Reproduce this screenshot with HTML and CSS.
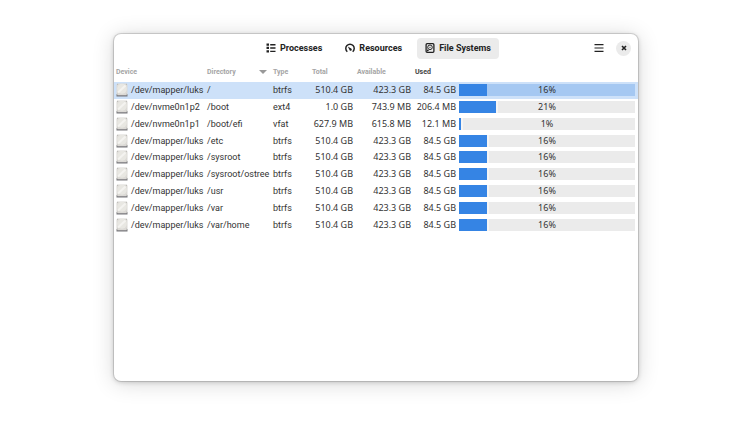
FILE: index.html
```html
<!DOCTYPE html>
<html lang="en">
<head>
    <meta charset="UTF-8">
    <meta name="viewport" content="width=device-width, initial-scale=1.0">
    <title>System Monitor</title>
    <link rel="stylesheet" href="styles.css">
</head>
<body>
    <svg class="defs" aria-hidden="true">
        <symbol id="drive" viewBox="0 0 12 14">
            <path d="M0.5 11h11v2.5H0.5z" fill="#77767b"/>
            <rect x="0.5" y="0.5" width="11" height="11.7" rx="1.5" fill="#dcdad6"/>
            <ellipse cx="6" cy="5.8" rx="4.8" ry="5" fill="#e8e7e2"/>
            <path d="M2 9.5 9.5 2.5" stroke="#f4f3f0" stroke-width="2"/>
            <path d="M1 1.3h1M10 1.3h1M1 11.2h1M10 11.2h1" stroke="#b0afac" stroke-width="0.8"/>
        </symbol>
    </svg>
    <main class="window">
        <header class="header-bar">
            <nav class="tabs">
                <button type="button" class="tab">
                    <svg viewBox="0 0 10 10" class="icon"><path d="M0.5 0.5h2.5v2.3h-2.5zM0.5 3.8h2.5v2.3h-2.5zM0.5 7.2h2.5v2.3h-2.5zM4.2 1h5.3v1.4H4.2zM4.2 4.3h5.3v1.4H4.2zM4.2 7.7h5.3v1.4H4.2z"/></svg>
                    Processes
                </button>
                <button type="button" class="tab">
                    <svg viewBox="0 0 10 10" class="icon"><path d="M2.3 8.7A4.2 4.2 0 1 1 7.7 8.7" fill="none" stroke="currentColor" stroke-width="1.5"/><path d="M2.8 3.4 6.2 5.6A1.2 1.2 0 1 1 4.4 6.7Z"/></svg>
                    Resources
                </button>
                <button type="button" class="tab active">
                    <svg viewBox="0 0 10 10" class="icon"><rect x="1.1" y="0.7" width="7.8" height="8.6" rx="1" fill="none" stroke="currentColor" stroke-width="1.3"/><circle cx="5" cy="4.3" r="2.3" fill="none" stroke="currentColor"/><circle cx="5" cy="4.3" r="0.6"/><path d="M2 8.5V6.2L4.2 7.7Z"/></svg>
                    File Systems
                </button>
            </nav>
            <div class="controls">
                <button type="button" class="menu-btn" aria-label="Main menu">
                    <svg viewBox="0 0 10 10" class="icon"><path d="M0.5 1h9v1.2h-9zM0.5 4.4h9v1.2h-9zM0.5 7.8h9V9h-9z"/></svg>
                </button>
                <button type="button" class="close-btn" aria-label="Close">
                    <svg viewBox="0 0 6 6"><path d="M1 1 5 5M5 1 1 5" stroke="currentColor" stroke-width="1.6"/></svg>
                </button>
            </div>
        </header>

        <table class="disks">
            <colgroup>
                <col class="col-device">
                <col class="col-directory">
                <col class="col-type">
                <col class="col-total">
                <col class="col-available">
                <col class="col-used">
                <col>
            </colgroup>
            <thead>
                <tr>
                    <th>Device</th>
                    <th><span class="sorted">Directory <svg viewBox="0 0 8 4" class="arrow"><path d="M0 0h8L4 4z"/></svg></span></th>
                    <th>Type</th>
                    <th>Total</th>
                    <th>Available</th>
                    <th class="used" colspan="2">Used</th>
                </tr>
            </thead>
            <tbody id="rows"></tbody>
        </table>
    </main>
    <script src="script.js"></script>
</body>
</html>
```
FILE: styles.css
```css
* {
    box-sizing: border-box;
}

body {
    font-family: Roboto, "Noto Sans", sans-serif;
    font-size: 9px;
    line-height: 12px;
    color: #333;
    margin: 0;
    padding: 34px 114px 42px;
    min-height: 100vh;
    display: flex;
    background-color: #fff;
}

.defs {
    display: none;
}

.window {
    flex: 1;
    background: #fff;
    border-radius: 7px;
    box-shadow: 0 0 0 1px rgba(0, 0, 0, 0.12), 0 1px 5px rgba(0, 0, 0, 0.2), 0 2px 22px rgba(0, 0, 0, 0.16);
}

.header-bar {
    display: grid;
    grid-template-columns: 1fr auto 1fr;
    align-items: center;
    height: 28px;
    padding: 0 7px 0 12px;
}

button {
    display: flex;
    align-items: center;
    justify-content: center;
    padding: 0;
    border: none;
    background: none;
    color: #222;
    font: inherit;
    cursor: pointer;
}

.icon {
    width: 10px;
    height: 10px;
    fill: currentColor;
}

.tabs {
    grid-column: 2;
    display: flex;
    gap: 7px;
}

.tab {
    gap: 4px;
    height: 21px;
    padding: 0 8px;
    border-radius: 4px;
    font-weight: bold;
}

.tab.active {
    background: #ebebeb;
}

.controls {
    display: flex;
    justify-content: flex-end;
    align-items: center;
    gap: 12px;
}

.close-btn {
    width: 15px;
    height: 15px;
    border-radius: 50%;
    background: #ebebeb;
}

.close-btn svg {
    width: 6px;
    height: 6px;
}

.disks {
    width: 100%;
    height: 171px;
    table-layout: fixed;
    border-collapse: collapse;
}

.col-device {
    width: 91px;
}

.col-directory {
    width: 66px;
}

.col-type {
    width: 39px;
}

.col-total {
    width: 45px;
}

.col-available {
    width: 58px;
}

.col-used {
    width: 45px;
}

th {
    height: 20px;
    padding: 0 2px;
    font-size: 7px;
    text-align: left;
    color: #a5a5a5;
}

th.used {
    color: #444;
}

.sorted {
    display: flex;
    align-items: center;
    justify-content: space-between;
    padding-right: 2px;
}

.arrow {
    width: 8px;
    height: 4px;
    fill: #999;
}

td {
    padding: 0 2px;
    white-space: nowrap;
}

.selected {
    background: #cde1f9;
}

.device {
    display: flex;
    align-items: center;
    gap: 3px;
}

.drive {
    flex-shrink: 0;
    width: 12px;
    height: 14px;
}

.size,
.percent {
    font-family: "Noto Sans", sans-serif;
}

.size {
    text-align: right;
}

.bar-cell {
    padding: 0 3px 0 1px;
}

.bar {
    display: grid;
    height: 12px;
    background: #ebebeb;
    text-align: center;
}

.bar .fill,
.bar .percent {
    grid-area: 1 / 1;
}

.bar .fill {
    background: #3584e4;
    box-shadow: 2px 0 #f6f5f4;
}

.selected .bar {
    background: #a5c8f2;
}

.selected .fill {
    box-shadow: none;
}
```
FILE: script.js
```javascript
const disks = [
    ["/dev/mapper/luks", "/", "btrfs", "510.4 GB", "423.3 GB", "84.5 GB", 16],
    ["/dev/nvme0n1p2", "/boot", "ext4", "1.0 GB", "743.9 MB", "206.4 MB", 21],
    ["/dev/nvme0n1p1", "/boot/efi", "vfat", "627.9 MB", "615.8 MB", "12.1 MB", 1],
    ["/dev/mapper/luks", "/etc", "btrfs", "510.4 GB", "423.3 GB", "84.5 GB", 16],
    ["/dev/mapper/luks", "/sysroot", "btrfs", "510.4 GB", "423.3 GB", "84.5 GB", 16],
    ["/dev/mapper/luks", "/sysroot/ostree", "btrfs", "510.4 GB", "423.3 GB", "84.5 GB", 16],
    ["/dev/mapper/luks", "/usr", "btrfs", "510.4 GB", "423.3 GB", "84.5 GB", 16],
    ["/dev/mapper/luks", "/var", "btrfs", "510.4 GB", "423.3 GB", "84.5 GB", 16],
    ["/dev/mapper/luks", "/var/home", "btrfs", "510.4 GB", "423.3 GB", "84.5 GB", 16]
];

document.getElementById("rows").innerHTML = disks.map((disk, index) => {
    const [device, directory, type, total, available, used, percent] = disk;
    return `<tr class="${index === 0 ? "selected" : ""}">
        <td><div class="device"><svg class="drive"><use href="#drive"/></svg>${device}</div></td>
        <td>${directory}</td>
        <td>${type}</td>
        <td class="size">${total}</td>
        <td class="size">${available}</td>
        <td class="size">${used}</td>
        <td class="bar-cell"><div class="bar"><div class="fill" style="width: ${percent}%"></div><span class="percent">${percent}%</span></div></td>
    </tr>`;
}).join("");
```
